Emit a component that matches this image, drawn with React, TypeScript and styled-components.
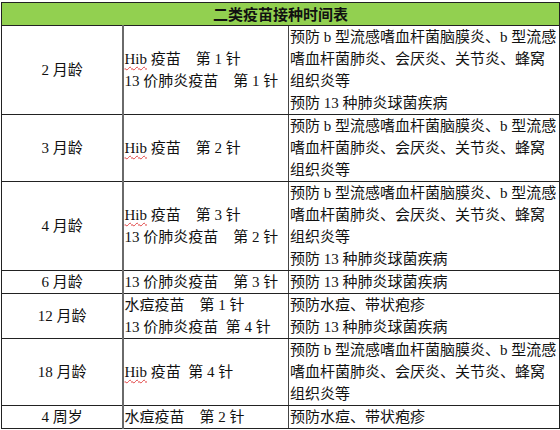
import React from 'react';
import styled, { createGlobalStyle } from 'styled-components';

const GlobalStyle = createGlobalStyle`
    html, body {
        margin: 0;
        padding: 0;
        background: #ffffff;
    }
`;

const Page = styled.div`
    padding: 2px 0 0 1px;
`;

const Table = styled.table`
    border-collapse: collapse;
    table-layout: fixed;
    width: 558px;
    font-family: 'Liberation Serif', 'Noto Sans CJK SC', serif;
    font-size: 15px;
    color: #111;
    border: 1px solid #222;
`;

const HeaderCell = styled.th`
    height: 22px;
    padding: 0;
    background: #92d050;
    border: 1px solid #222;
    font-family: 'Noto Sans CJK SC', sans-serif;
    font-weight: 700;
    font-size: 15px;
    line-height: 22px;
    text-align: center;
    color: #111;
`;

const Cell = styled.td<{ $align?: 'left' | 'center' }>`
    padding: 0 0 0 1px;
    border-top: 1px solid #222;
    border-bottom: 1px solid #222;
    text-align: ${p => p.$align || 'left'};
    vertical-align: middle;
    line-height: 22px;
`;

const AgeCell = styled(Cell)`
    border-right: 2px solid #6a6a6a;
`;

const VaccineCell = styled(Cell)`
    border-right: 1px solid #444;
`;

const Line = styled.div`
    white-space: pre;
`;

const Spell = styled.span`
    text-decoration: underline wavy #e04040;
    text-decoration-thickness: 1px;
    text-underline-offset: 2px;
`;

interface Row {
    age: string;
    vaccines: string[];
    notes: string[];
}

const HIB_NOTE = [
    '预防 b 型流感嗜血杆菌脑膜炎、b 型流感',
    '嗜血杆菌肺炎、会厌炎、关节炎、蜂窝',
    '组织炎等'
];
const PCV_NOTE = '预防 13 种肺炎球菌疾病';
const VAR_NOTE = '预防水痘、带状疱疹';

const rows: Row[] = [
    {
        age: '2 月龄',
        vaccines: ['Hib 疫苗　第 1 针', '13 价肺炎疫苗　第 1 针'],
        notes: [...HIB_NOTE, PCV_NOTE]
    },
    { age: '3 月龄', vaccines: ['Hib 疫苗　第 2 针'], notes: HIB_NOTE },
    {
        age: '4 月龄',
        vaccines: ['Hib 疫苗　第 3 针', '13 价肺炎疫苗　第 2 针'],
        notes: [...HIB_NOTE, PCV_NOTE]
    },
    { age: '6 月龄', vaccines: ['13 价肺炎疫苗　第 3 针'], notes: [PCV_NOTE] },
    {
        age: '12 月龄',
        vaccines: ['水痘疫苗　第 1 针', '13 价肺炎疫苗  第 4 针'],
        notes: [VAR_NOTE, PCV_NOTE]
    },
    { age: '18 月龄', vaccines: ['Hib 疫苗  第 4 针'], notes: HIB_NOTE },
    { age: '4 周岁', vaccines: ['水痘疫苗　第 2 针'], notes: [VAR_NOTE] }
];

const VaccineLine = ({ text }: { text: string }) =>
    text.startsWith('Hib') ? (
        <Line>
            <Spell>Hib</Spell>
            {text.slice(3)}
        </Line>
    ) : (
        <Line>{text}</Line>
    );

const App = () => (
    <>
        <GlobalStyle />
        <Page>
            <Table>
                <colgroup>
                    <col style={{ width: 121 }} />
                    <col style={{ width: 166 }} />
                    <col style={{ width: 271 }} />
                </colgroup>
                <thead>
                    <tr>
                        <HeaderCell colSpan={3}>二类疫苗接种时间表</HeaderCell>
                    </tr>
                </thead>
                <tbody>
                    {rows.map(row => (
                        <tr key={row.age}>
                            <AgeCell $align="center">{row.age}</AgeCell>
                            <VaccineCell>
                                {row.vaccines.map(v => (
                                    <VaccineLine key={v} text={v} />
                                ))}
                            </VaccineCell>
                            <Cell>
                                {row.notes.map((n, i) => (
                                    <Line key={i}>{n}</Line>
                                ))}
                            </Cell>
                        </tr>
                    ))}
                </tbody>
            </Table>
        </Page>
    </>
);

export default App;
